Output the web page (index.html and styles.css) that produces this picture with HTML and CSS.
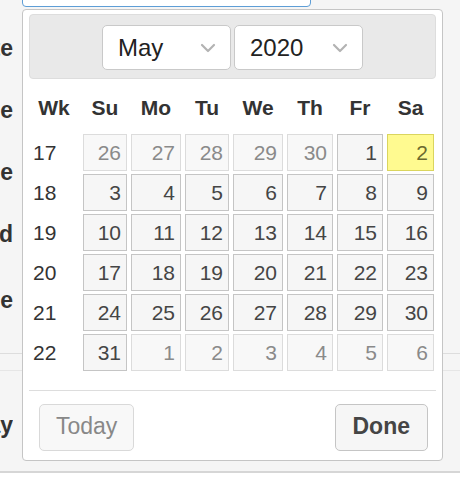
FILE: index.html
```html
<!DOCTYPE html>
<html lang="en">
<head>
<meta charset="utf-8">
<title>Datepicker</title>
<link rel="stylesheet" href="styles.css">
</head>
<body>
<div class="page">
  <div class="form">
    <div class="field-input"></div>
    <div class="row"><div class="label"><span>Date</span></div></div>
    <div class="row"><div class="label"><span>Time</span></div></div>
    <div class="row"><div class="label"><span>Name</span></div></div>
    <div class="row"><div class="label"><span>Period</span></div></div>
    <div class="row row-tall"><div class="label"><span>Type</span></div></div>
    <div class="band"></div>
    <div class="row row-last"><div class="label"><span>Day</span></div></div>
  </div>
  <div class="footer"></div>
</div>

<div class="datepicker">
  <div class="dp-header">
    <div class="dp-select"><span>May</span><svg class="chev" width="16" height="10" viewBox="0 0 16 10"><polyline points="2,2 8,8 14,2" fill="none" stroke="#b3b3b3" stroke-width="2.2" stroke-linecap="round" stroke-linejoin="round"/></svg></div>
    <div class="dp-select"><span>2020</span><svg class="chev" width="16" height="10" viewBox="0 0 16 10"><polyline points="2,2 8,8 14,2" fill="none" stroke="#b3b3b3" stroke-width="2.2" stroke-linecap="round" stroke-linejoin="round"/></svg></div>
  </div>
  <div class="dp-grid">
    <div class="dp-th">Wk</div><div class="dp-th">Su</div><div class="dp-th">Mo</div><div class="dp-th">Tu</div><div class="dp-th">We</div><div class="dp-th">Th</div><div class="dp-th">Fr</div><div class="dp-th">Sa</div>

    <div class="dp-wk">17</div><div class="dp-day other">26</div><div class="dp-day other">27</div><div class="dp-day other">28</div><div class="dp-day other">29</div><div class="dp-day other">30</div><div class="dp-day">1</div><div class="dp-day highlight">2</div>
    <div class="dp-wk">18</div><div class="dp-day">3</div><div class="dp-day">4</div><div class="dp-day">5</div><div class="dp-day">6</div><div class="dp-day">7</div><div class="dp-day">8</div><div class="dp-day">9</div>
    <div class="dp-wk">19</div><div class="dp-day">10</div><div class="dp-day">11</div><div class="dp-day">12</div><div class="dp-day">13</div><div class="dp-day">14</div><div class="dp-day">15</div><div class="dp-day">16</div>
    <div class="dp-wk">20</div><div class="dp-day">17</div><div class="dp-day">18</div><div class="dp-day">19</div><div class="dp-day">20</div><div class="dp-day">21</div><div class="dp-day">22</div><div class="dp-day">23</div>
    <div class="dp-wk">21</div><div class="dp-day">24</div><div class="dp-day">25</div><div class="dp-day">26</div><div class="dp-day">27</div><div class="dp-day">28</div><div class="dp-day">29</div><div class="dp-day">30</div>
    <div class="dp-wk">22</div><div class="dp-day">31</div><div class="dp-day other">1</div><div class="dp-day other">2</div><div class="dp-day other">3</div><div class="dp-day other">4</div><div class="dp-day other">5</div><div class="dp-day other">6</div>
  </div>
  <div class="dp-pane">
    <button class="dp-btn today">Today</button>
    <button class="dp-btn done">Done</button>
  </div>
</div>
</body>
</html>
```

FILE: styles.css
```css
* { box-sizing: border-box; }

html, body {
  margin: 0;
  padding: 0;
  width: 460px;
  height: 488px;
  overflow: hidden;
  background: #ffffff;
  font-family: "Liberation Sans", Arial, sans-serif;
}

.page {
  position: relative;
}

.form {
  background: #f5f5f5;
  padding-top: 1px;
  margin-top: -1px;
}

.field-input {
  margin: -30px 0 0 22px;
  width: 289px;
  height: 37px;
  background: #ffffff;
  border: 1px solid #5e9ed6;
  border-radius: 4px;
}

.row {
  height: 62px;
}

.row:first-of-type { }

.field-input + .row {
  margin-top: 26px;
}

.row-tall {
  margin-top: 4px;
  height: 68px;
}

.band {
  height: 18px;
  border-top: 1px solid #dddddd;
  border-bottom: 1px solid #e6e6e6;
}

.row-last {
  height: 100px;
  padding-top: 39px;
}

.label {
  width: 13px;
  height: 30px;
  overflow: hidden;
  display: flex;
  justify-content: flex-end;
  white-space: nowrap;
  font-weight: bold;
  font-size: 23px;
  line-height: 30px;
  color: #333333;
}

.label span { flex: none; }

.footer {
  border-top: 2px solid #d6d6d6;
  height: 18px;
  background: #ffffff;
}

/* Datepicker popup */
.datepicker {
  position: absolute;
  left: 22px;
  top: 9px;
  width: 421px;
  background: #ffffff;
  border: 1px solid #c5c5c5;
  border-radius: 4px;
  padding: 4px 6px 9px;
  color: #333333;
}

.dp-header {
  display: flex;
  justify-content: center;
  gap: 3px;
  padding: 10px 0 8px;
  background: #e9e9e9;
  border: 1px solid #dddddd;
  border-radius: 4px;
}

.dp-select {
  width: 129px;
  height: 45px;
  display: flex;
  align-items: center;
  justify-content: space-between;
  padding: 0 14px 0 15px;
  background: #ffffff;
  border: 1px solid #c9c9c9;
  border-radius: 5px;
  font-size: 24px;
  color: #222222;
}

.chev { display: block; }

.dp-grid {
  display: grid;
  grid-template-columns: 50px 44px 50px 44px 50px 46px 46px 47px;
  grid-template-rows: 52px repeat(6, 37px);
  column-gap: 4px;
  row-gap: 3px;
  font-size: 21px;
}

.dp-th {
  font-weight: bold;
  text-align: center;
  padding-top: 6px;
  line-height: 46px;
  color: #333333;
}

.dp-wk {
  padding-left: 4px;
  line-height: 37px;
  color: #333333;
}

.dp-day {
  border: 1px solid #c5c5c5;
  background: #f6f6f6;
  color: #454545;
  text-align: right;
  padding-right: 5px;
  line-height: 35px;
}

.dp-day.other {
  border-color: #dcdcdc;
  background: #f8f8f8;
  color: #8a8a8a;
}

.dp-day.highlight {
  border-color: #dad55e;
  background: #fffa90;
  color: #6b6a2e;
}

.dp-pane {
  margin-top: 19px;
  border-top: 1px solid #dddddd;
  display: flex;
  justify-content: space-between;
  padding: 13px 8px 0 10px;
}

.dp-btn {
  height: 47px;
  border: 1px solid #c5c5c5;
  border-radius: 5px;
  background: #f6f6f6;
  font-family: "Liberation Sans", Arial, sans-serif;
  font-size: 23px;
  line-height: 41px;
  padding: 0 17px 3px;
  color: #454545;
  margin: 0;
}

.dp-btn.today {
  padding: 0 16px 3px;
  border-color: #d9d9d9;
  background: #f8f8f8;
  color: #888888;
}

.dp-btn.done {
  font-weight: bold;
}
```
